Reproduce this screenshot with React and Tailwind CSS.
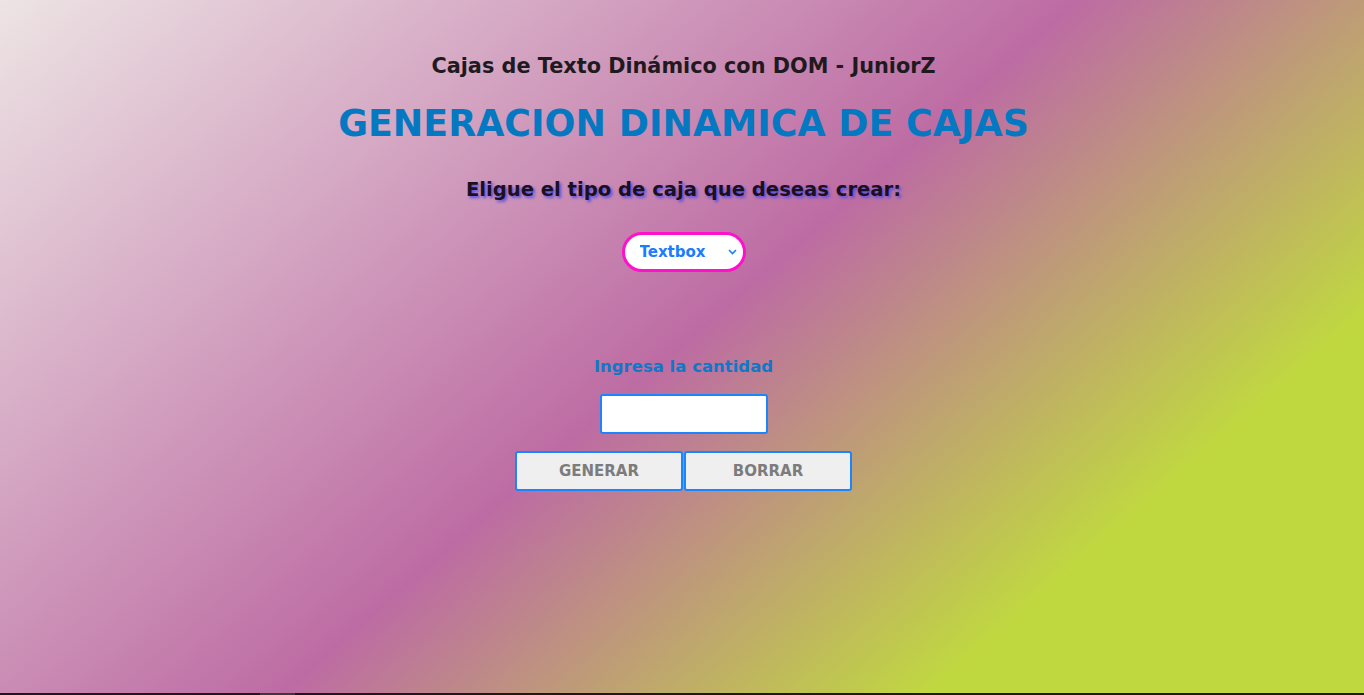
import { useState } from "react";

export default function App() {
  const [tipo, setTipo] = useState("textbox");
  const [cantidad, setCantidad] = useState("");

  return (
    <div className="w-full font-['DejaVu_Sans',sans-serif]">
      <div className="h-[693px] w-full overflow-hidden bg-[linear-gradient(139deg,#ede4e4_0%,#bd6ca3_50%,#c0d840_80%,#c0d840_100%)]">
        <div className="flex flex-col items-center pl-[3px]">
          <h3 className="mt-[54px] text-[20.8px] leading-[24px] font-bold text-[#1e1a1e]">
            Cajas de Texto Dinámico con DOM - JuniorZ
          </h3>

          <h1 className="mt-[25px] text-[36.4px] leading-[42px] font-bold text-[#0478c1]">
            GENERACION DINAMICA DE CAJAS
          </h1>

          <h2 className="mt-[33px] text-[19.6px] leading-[23px] font-bold text-[#1a1020] [text-shadow:2px_2px_3px_#5a4fe0]">
            Eligue el tipo de caja que deseas crear:
          </h2>

          <div className="relative mt-[31px]">
            <select
              value={tipo}
              onChange={(e) => setTipo(e.target.value)}
              className="h-[40px] w-[124px] appearance-none rounded-full border-[3px] border-[#ff10cc] bg-white pl-[15px] text-[15px] font-bold text-[#1a7cff] outline-none"
            >
              <option value="textbox">Textbox</option>
              <option value="textarea">Textarea</option>
            </select>
            <svg
              className="pointer-events-none absolute right-[9px] top-[17px]"
              width="9"
              height="6"
              viewBox="0 0 9 6"
              fill="none"
            >
              <path d="M1 1l3.5 3.5L8 1" stroke="#1a7cff" strokeWidth="1.6" />
            </svg>
          </div>

          <p className="mt-[85px] text-[16.5px] leading-[20px] font-bold text-[#1177c6]">
            Ingresa la cantidad
          </p>

          <input
            type="number"
            value={cantidad}
            onChange={(e) => setCantidad(e.target.value)}
            className="mt-[17px] h-[40px] w-[168px] rounded-[3px] border-2 border-[#1a85ff] bg-white px-2 outline-none"
          />

          <div className="mt-[17px] flex gap-[1px]">
            <button className="h-[40px] w-[168px] rounded-[3px] border-2 border-[#1a85ff] bg-[#efefef] text-[15px] font-bold text-[#7c7c7c]">
              GENERAR
            </button>
            <button className="h-[40px] w-[168px] rounded-[3px] border-2 border-[#1a85ff] bg-[#efefef] text-[15px] font-bold text-[#7c7c7c]">
              BORRAR
            </button>
          </div>
        </div>
      </div>
      <div className="flex h-[2px] w-full bg-[#1a1a1e]">
        <div className="ml-[260px] h-full w-[35px] bg-[#3a3a3e]" />
      </div>
    </div>
  );
}
